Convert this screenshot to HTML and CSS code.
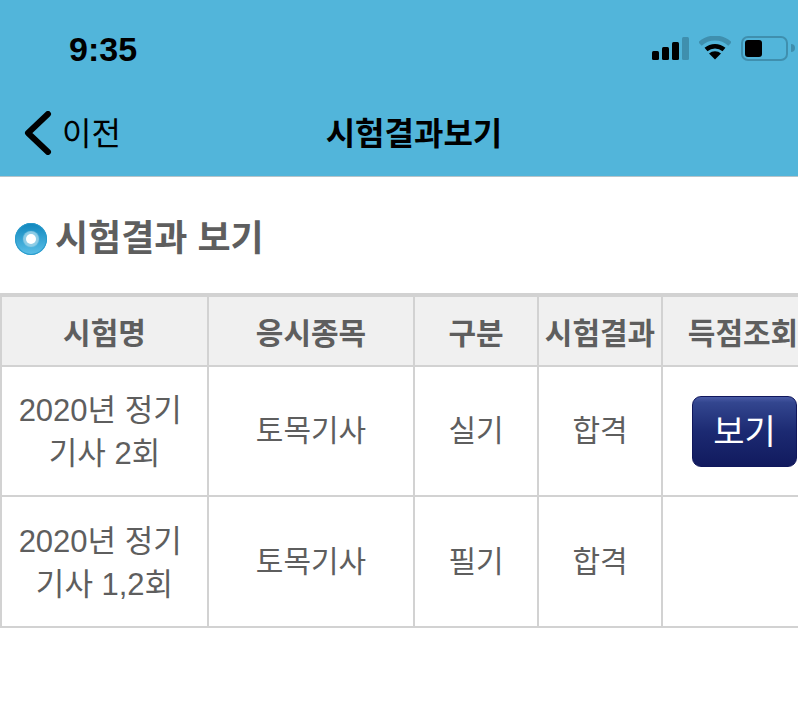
FILE: index.html
```html
<!DOCTYPE html>
<html>
<head>
    <meta charset="UTF-8">
    <title>시험결과보기</title>
    <link rel="stylesheet" href="styles.css">
</head>
<body>
    <div id="header">
        <div id="status">
            <span id="time">9:35</span>
            <div id="status-icons">
                <svg width="37" height="24" viewBox="0 0 37 24">
                    <rect x="0" y="15" width="7" height="9" rx="1.500" fill="#000"/>
                    <rect x="10" y="11" width="7" height="13" rx="1.500" fill="#000"/>
                    <rect x="20" y="6" width="7" height="18" rx="1.500" fill="#000"/>
                    <rect x="30" y="1" width="7" height="23" rx="1.500" fill="#3f8fae"/>
                </svg>
                <svg class="wifi" width="32" height="24" viewBox="0 0 32 24">
                    <path d="M1 8 A22 22 0 0 1 31 8" fill="none" stroke="#3f8fae" stroke-width="5"/>
                    <path d="M7 13.500 A14 14 0 0 1 25 13.500" fill="none" stroke="#000" stroke-width="4.500"/>
                    <path d="M10 17.500 L16 23.500 L22 17.500 A9 9 0 0 0 10 17.500 Z" fill="#000"/>
                </svg>
                <div id="battery"><div id="battery-level"></div></div>
                <div id="battery-tip"></div>
            </div>
        </div>
        <div id="nav">
            <a id="back" href="#">
                <svg width="28" height="44" viewBox="0 0 28 44">
                    <path d="M24 3 L4 22 L24 41" fill="none" stroke="#000" stroke-width="6" stroke-linecap="round" stroke-linejoin="round"/>
                </svg>
                <span>이전</span>
            </a>
            <h1>시험결과보기</h1>
        </div>
    </div>
    <div id="title">
        <span id="bullet"><span id="bullet-hole"></span></span>
        <h2>시험결과 보기</h2>
    </div>
    <table>
        <colgroup>
            <col class="col-name">
            <col class="col-item">
            <col class="col-type">
            <col class="col-result">
            <col class="col-score">
        </colgroup>
        <thead>
            <tr>
                <th>시험명</th>
                <th>응시종목</th>
                <th>구분</th>
                <th>시험결과</th>
                <th>득점조회</th>
            </tr>
        </thead>
        <tbody>
            <tr>
                <td class="name">2020년 정기&nbsp;<br>기사 2회</td>
                <td>토목기사</td>
                <td>실기</td>
                <td>합격</td>
                <td class="score"><button class="view-button">보기</button></td>
            </tr>
            <tr>
                <td class="name">2020년 정기&nbsp;<br>기사 1,2회</td>
                <td>토목기사</td>
                <td>필기</td>
                <td>합격</td>
                <td class="score"></td>
            </tr>
        </tbody>
    </table>
</body>
</html>
```

FILE: styles.css
```css
body {
    margin: 0;
    padding: 0;
    width: 798px;
    height: 724px;
    overflow: hidden;
    background-color: #fff;
    font-family: "Liberation Sans", "Noto Sans CJK KR", sans-serif;
}
#header {
    height: 176px;
    background-color: #52b5da;
    border-bottom: 1px solid #b5c4ca;
}
#status {
    height: 90px;
    display: flex;
    justify-content: space-between;
    align-items: center;
    padding: 8px 3px 0 69px;
    box-sizing: border-box;
}
#time {
    font-size: 34px;
    font-weight: bold;
    color: #000;
}
#status-icons {
    display: flex;
    align-items: center;
    margin-bottom: 2px;
}
.wifi {
    margin-left: 10px;
    margin-right: 10px;
}
#battery {
    width: 47px;
    height: 25px;
    box-sizing: border-box;
    border: 2px solid #3f8fae;
    border-radius: 7px;
    padding: 2px;
}
#battery-level {
    width: 17px;
    height: 17px;
    background-color: #000;
    border-radius: 3px;
}
#battery-tip {
    width: 4px;
    height: 8px;
    margin-left: 3px;
    background-color: #3f8fae;
    border-radius: 0 4px 4px 0;
}
#nav {
    height: 86px;
    position: relative;
    display: flex;
    align-items: center;
    justify-content: center;
}
#nav h1 {
    margin: 0 0 5px 30px;
    font-size: 32px;
    font-weight: bold;
    color: #000;
}
#back {
    position: absolute;
    left: 24px;
    top: 18px;
    display: flex;
    align-items: center;
    gap: 10px;
    color: #000;
    text-decoration: none;
    font-size: 32px;
}
#back span {
    margin-bottom: 3px;
}
#title {
    height: 116px;
    display: flex;
    align-items: center;
    padding-left: 15px;
    gap: 8px;
}
#title h2 {
    margin: 0 0 1px 0;
    font-size: 36px;
    font-weight: bold;
    color: #5e5e5e;
}
#bullet {
    width: 32px;
    height: 32px;
    border-radius: 50%;
    display: flex;
    align-items: center;
    justify-content: center;
    background: linear-gradient(#0f86bd, #5cc0e8);
    box-shadow: inset 0 0 0 1px #2a9bcb;
    margin-top: 7px;
}
#bullet-hole {
    width: 10px;
    height: 10px;
    border-radius: 50%;
    background-color: #fff;
    box-shadow: 0 0 1px 3px #8fcde6;
}
table {
    border-collapse: separate;
    border-spacing: 0;
    table-layout: fixed;
    width: 823px;
    color: #5e5e5e;
    font-size: 30px;
    border-top: 4px solid #d2d2d2;
    border-left: 2px solid #d2d2d2;
}
.col-name { width: 207px; }
.col-item { width: 206px; }
.col-type { width: 124px; }
.col-result { width: 124px; }
.col-score { width: 162px; }
th, td {
    border-right: 2px solid #d2d2d2;
    border-bottom: 2px solid #d2d2d2;
    padding: 0;
    text-align: center;
    box-sizing: border-box;
}
th {
    height: 70px;
    background-color: #f0f0f0;
    font-size: 30px;
    font-weight: bold;
    white-space: nowrap;
}
td {
    height: 130px;
    line-height: 44px;
}
tbody tr:last-child td {
    height: 131px;
}
.name {
    font-size: 31px;
    line-height: 43px;
    padding-top: 2px;
}
.score {
    text-align: left;
    padding-left: 29px;
}
.view-button {
    display: block;
    width: 105px;
    height: 71px;
    padding: 0 0 4px 0;
    border: 1px solid #10175c;
    border-radius: 9px;
    background: linear-gradient(#4a5ba6 0, #33468f 8%, #1c2a72 50%, #111a5e 100%);
    color: #fff;
    font-family: "Liberation Sans", "Noto Sans CJK KR", sans-serif;
    font-size: 34px;
}
```
